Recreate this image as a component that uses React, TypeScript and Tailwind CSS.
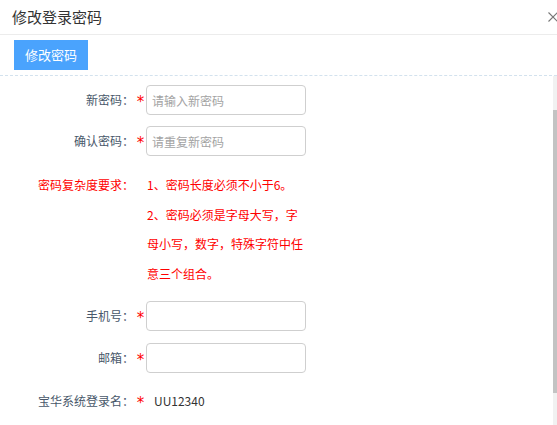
import React from "react";

const font = { fontFamily: '"Noto Sans CJK SC", "Noto Sans", sans-serif' };

function Row({ label, children }: { label: string; children: React.ReactNode }) {
  return (
    <div className="flex items-center h-[30px]">
      <div className="w-[134px] text-right text-[12px] text-[#48576a] whitespace-nowrap">{label}</div>
      <div className="w-[12px] text-[15px] text-[#ff0000] text-center leading-[15px] pt-[4px] pl-[1px]" style={{ fontFamily: '"DejaVu Sans", sans-serif' }}>*</div>
      {children}
    </div>
  );
}

function Input({ placeholder }: { placeholder?: string }) {
  return (
    <input
      placeholder={placeholder}
      className="w-[160px] h-[30px] border border-[#cfcfcf] rounded-[4px] px-[5px] text-[12px] text-[#333] placeholder:text-[#a3a3a3] outline-none bg-white"
      style={font}
    />
  );
}

export default function App() {
  return (
    <div className="w-[557px] h-[425px] bg-white overflow-hidden flex flex-col" style={font}>
      <div className="h-[35px] border-b border-[#ececec] flex items-center justify-between pl-[12px] shrink-0">
        <span className="text-[15px] text-[#333] pt-[1px]">修改登录密码</span>
        <svg width="10" height="10" viewBox="0 0 10 10" className="mr-[-1px] mb-[1px]">
          <path d="M0.5 0.5 L9.5 9.5 M9.5 0.5 L0.5 9.5" stroke="#777" strokeWidth="1.1" />
        </svg>
      </div>
      <div className="h-[41px] border-b border-dashed border-[#d3e2ee] pl-[14px] pt-[5px] shrink-0">
        <div className="w-[74px] h-[30px] bg-[#4aa3fd] text-white text-[13px] flex items-center justify-center">
          修改密码
        </div>
      </div>
      <div className="flex flex-1 min-h-0">
        <div className="flex-1 pt-[9px]">
          <Row label="新密码：">
            <Input placeholder="请输入新密码" />
          </Row>
          <div className="mt-[11px]">
            <Row label="确认密码：">
              <Input placeholder="请重复新密码" />
            </Row>
          </div>
          <div className="mt-[14px] flex text-[12px] text-[#ff0000] leading-[29.5px]">
            <div className="w-[134px] text-right whitespace-nowrap">密码复杂度要求：</div>
            <div className="w-[160px] ml-[13px]">
              <div>1、密码长度必须不小于6。</div>
              <div>2、密码必须是字母大写，字母小写，数字，特殊字符中任意三个组合。</div>
            </div>
          </div>
          <div className="mt-[13px]">
            <Row label="手机号：">
              <Input />
            </Row>
          </div>
          <div className="mt-[12px]">
            <Row label="邮箱：">
              <Input />
            </Row>
          </div>
          <div className="mt-[13px]">
            <Row label="宝华系统登录名：">
              <span className="ml-[8px] text-[12px] text-[#333]">UU12340</span>
            </Row>
          </div>
        </div>
        <div className="w-[4px] bg-[#f1f1f1] flex flex-col">
          <div className="h-[34px]" />
          <div className="h-[283px] bg-[#c3c3c3]" />
        </div>
      </div>
    </div>
  );
}
